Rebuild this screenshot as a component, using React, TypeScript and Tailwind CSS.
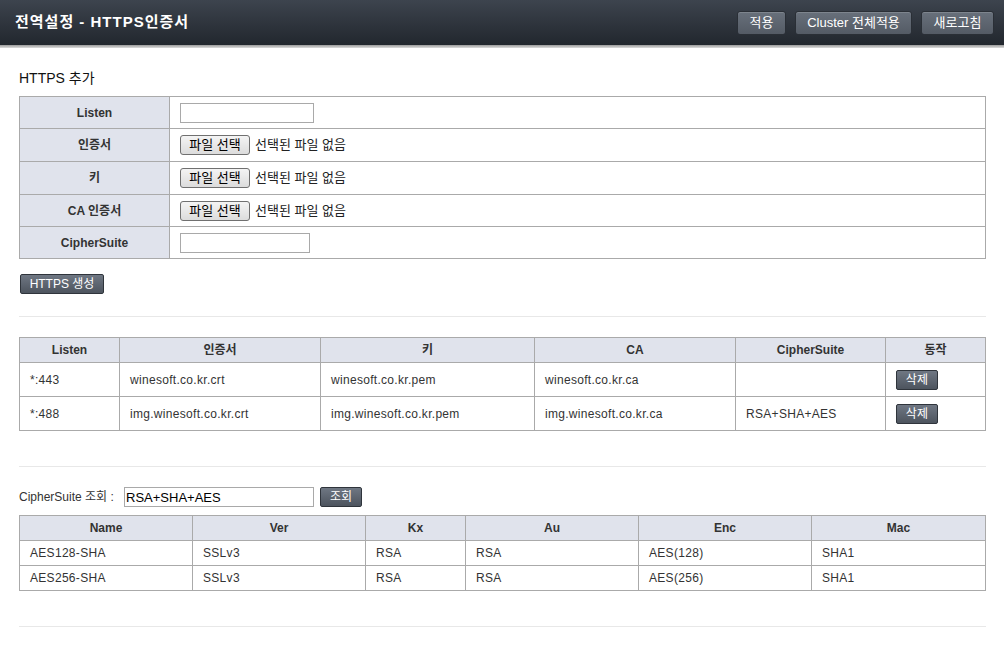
import React from "react";

const FONT = "font-['Liberation_Sans','Noto_Sans_CJK_KR',sans-serif]";

const certs = [
  { listen: "*:443", cert: "winesoft.co.kr.crt", key: "winesoft.co.kr.pem", ca: "winesoft.co.kr.ca", suite: "" },
  { listen: "*:488", cert: "img.winesoft.co.kr.crt", key: "img.winesoft.co.kr.pem", ca: "img.winesoft.co.kr.ca", suite: "RSA+SHA+AES" },
];

const ciphers = [
  { name: "AES128-SHA", ver: "SSLv3", kx: "RSA", au: "RSA", enc: "AES(128)", mac: "SHA1" },
  { name: "AES256-SHA", ver: "SSLv3", kx: "RSA", au: "RSA", enc: "AES(256)", mac: "SHA1" },
];

function TopButton({ label, w }: { label: string; w: string }) {
  return (
    <button
      className={`h-[24px] ${w} rounded-[3px] border border-[#2a2f36] bg-gradient-to-b from-[#68707b] to-[#545b65] text-[13px] text-white shadow-[inset_0_1px_0_rgba(255,255,255,0.15)]`}
    >
      {label}
    </button>
  );
}

function DarkButton({ label, w }: { label: string; w: string }) {
  return (
    <button
      className={`block h-[20px] ${w} rounded-[2px] border border-[#2f343b] bg-gradient-to-b from-[#6f7783] to-[#4d545e] text-[12px] text-white`}
    >
      {label}
    </button>
  );
}

function FileInput() {
  return (
    <div className="flex items-center gap-[5px]">
      <span className="flex h-[20px] w-[70px] items-center justify-center rounded-[3px] border border-[#707070] bg-gradient-to-b from-[#f4f4f4] to-[#dcdcdc] text-[13px] text-black">
        파일 선택
      </span>
      <span className="text-[13px] text-[#222]">선택된 파일 없음</span>
    </div>
  );
}

function FormRow({ label, h, children }: { label: string; h: string; children: React.ReactNode }) {
  return (
    <tr className={h}>
      <th className="w-[150px] border border-[#aaaaaa] bg-[#e0e3ec] text-center text-[12px] font-bold text-[#333]">
        {label}
      </th>
      <td className="border border-[#aaaaaa] px-[10px]">{children}</td>
    </tr>
  );
}

const th = "border border-[#aaaaaa] bg-[#e0e3ec] text-center text-[12px] font-bold text-[#333]";
const td = "border border-[#aaaaaa] px-[10px] text-[12px] tracking-[0.3px] text-[#333]";

export default function App() {
  return (
    <div className={`min-h-[660px] w-[1004px] bg-white ${FONT}`}>
      <div className="flex h-[45px] items-center justify-between bg-gradient-to-b from-[#3d444e] to-[#22272e] pl-[15px] pr-[10px]">
        <div className="text-[15px] font-bold tracking-[1px] text-white">전역설정 - HTTPS인증서</div>
        <div className="flex gap-[9px]">
          <TopButton label="적용" w="w-[49px]" />
          <TopButton label="Cluster 전체적용" w="w-[117px]" />
          <TopButton label="새로고침" w="w-[73px]" />
        </div>
      </div>
      <div className="h-[3px] bg-gradient-to-b from-[#9a9a9a] to-[#dcdcdc]" />

      <div className="px-[19px] pr-[18px]">
        <div className="pt-[20px] text-[14px] text-[#111]">HTTPS 추가</div>

        <table className="mt-[7px] w-full border-collapse">
          <tbody>
            <FormRow label="Listen" h="h-[32px]">
              <input className="block h-[20px] w-[134px] border border-[#a9a9a9]" />
            </FormRow>
            <FormRow label="인증서" h="h-[33px]">
              <FileInput />
            </FormRow>
            <FormRow label="키" h="h-[33px]">
              <FileInput />
            </FormRow>
            <FormRow label="CA 인증서" h="h-[32px]">
              <FileInput />
            </FormRow>
            <FormRow label="CipherSuite" h="h-[32px]">
              <input className="block h-[20px] w-[130px] border border-[#a9a9a9]" />
            </FormRow>
          </tbody>
        </table>

        <div className="flex pl-px pt-[15px]">
          <DarkButton label="HTTPS 생성" w="w-[84px]" />
        </div>

        <div className="mt-[22px] h-px bg-[#e8e8e8]" />

        <table className="mt-[20px] w-full table-fixed border-collapse">
          <colgroup>
            <col className="w-[100px]" />
            <col className="w-[201px]" />
            <col className="w-[214px]" />
            <col className="w-[201px]" />
            <col className="w-[150px]" />
            <col />
          </colgroup>
          <thead>
            <tr className="h-[25px]">
              <th className={th}>Listen</th>
              <th className={th}>인증서</th>
              <th className={th}>키</th>
              <th className={th}>CA</th>
              <th className={th}>CipherSuite</th>
              <th className={th}>동작</th>
            </tr>
          </thead>
          <tbody>
            {certs.map((c) => (
              <tr key={c.listen} className="h-[34px]">
                <td className={td}>{c.listen}</td>
                <td className={td}>{c.cert}</td>
                <td className={td}>{c.key}</td>
                <td className={td}>{c.ca}</td>
                <td className={td}>{c.suite}</td>
                <td className={td}>
                  <DarkButton label="삭제" w="w-[42px]" />
                </td>
              </tr>
            ))}
          </tbody>
        </table>

        <div className="mt-[35px] h-px bg-[#e8e8e8]" />

        <div className="mt-[20px] flex items-center text-[12px] text-[#333]">
          <span className="w-[105px]">CipherSuite 조회 :</span>
          <input
            defaultValue="RSA+SHA+AES"
            className="h-[20px] w-[190px] border border-[#a9a9a9] px-[1px] text-[13px] text-black"
          />
          <span className="ml-[6px]">
            <DarkButton label="조회" w="w-[42px]" />
          </span>
        </div>

        <table className="mt-[8px] w-full table-fixed border-collapse">
          <colgroup>
            <col className="w-[173px]" />
            <col className="w-[173px]" />
            <col className="w-[100px]" />
            <col className="w-[173px]" />
            <col className="w-[173px]" />
            <col />
          </colgroup>
          <thead>
            <tr className="h-[25px]">
              <th className={th}>Name</th>
              <th className={th}>Ver</th>
              <th className={th}>Kx</th>
              <th className={th}>Au</th>
              <th className={th}>Enc</th>
              <th className={th}>Mac</th>
            </tr>
          </thead>
          <tbody>
            {ciphers.map((c) => (
              <tr key={c.name} className="h-[25px]">
                <td className={td}>{c.name}</td>
                <td className={td}>{c.ver}</td>
                <td className={td}>{c.kx}</td>
                <td className={td}>{c.au}</td>
                <td className={td}>{c.enc}</td>
                <td className={td}>{c.mac}</td>
              </tr>
            ))}
          </tbody>
        </table>

        <div className="mt-[35px] h-px bg-[#e8e8e8]" />
      </div>
    </div>
  );
}
